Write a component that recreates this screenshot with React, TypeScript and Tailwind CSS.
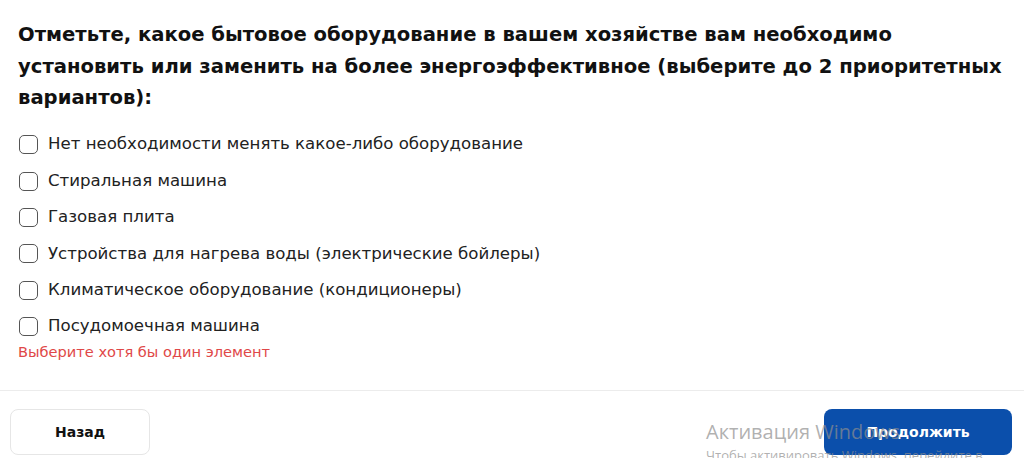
import { useState } from 'react'

const options = [
  'Нет необходимости менять какое-либо оборудование',
  'Стиральная машина',
  'Газовая плита',
  'Устройства для нагрева воды (электрические бойлеры)',
  'Климатическое оборудование (кондиционеры)',
  'Посудомоечная машина',
]

export default function App() {
  const [checked, setChecked] = useState<string[]>([])

  const toggle = (opt: string) => {
    setChecked((prev) => (prev.includes(opt) ? prev.filter((o) => o !== opt) : [...prev, opt]))
  }

  return (
    <div className="relative h-[458px] w-[1024px] overflow-hidden bg-white font-['DejaVu_Sans',sans-serif] text-[#1a1a1a]">
      {/* Вопрос */}
      <div className="pl-[18px] pr-[2px] pt-[19px]">
        <h2 className="text-[19.6px] font-bold leading-[31.5px] text-[#111]">
          Отметьте, какое бытовое оборудование в вашем хозяйстве вам необходимо установить или заменить на
          более энергоэффективное (выберите до 2 приоритетных вариантов):
        </h2>

        <div className="mt-[13px] flex flex-col">
          {options.map((opt) => (
            <label key={opt} className="flex h-[36.4px] cursor-pointer items-center gap-[10px] pl-[1px]">
              <input
                type="checkbox"
                className="sr-only"
                checked={checked.includes(opt)}
                onChange={() => toggle(opt)}
              />
              <span className="h-[19px] w-[19px] shrink-0 rounded-[5px] border-[1.5px] border-[#555] bg-white" />
              <span className="text-[16.6px] leading-none text-[#222]">{opt}</span>
            </label>
          ))}
        </div>

        <p className="text-[14.6px] leading-[14.5px] text-[#e04848]">Выберите хотя бы один элемент</p>
      </div>

      {/* Низ с кнопками */}
      <div className="mt-[31px] border-t border-[#ececec] px-[10px] pt-[18px]">
        <div className="flex items-center justify-between">
          <button className="h-[46px] w-[140px] rounded-[8px] border border-[#e6e6e6] bg-white text-[14px] font-bold text-[#111]">
            Назад
          </button>
          <button className="mr-[2px] h-[46px] w-[188px] rounded-[8px] bg-[#0b4fab] text-[14px] font-bold text-white">
            Продолжить
          </button>
        </div>
      </div>

      {/* Водяной знак Windows */}
      <div className="pointer-events-none absolute left-[706px] top-[419px] font-['Open_Sans',sans-serif] text-[#8e8e8e]/70">
        <div className="text-[20px] leading-[26px]">Активация Windows</div>
        <div className="text-[13px] leading-[20px]">Чтобы активировать Windows, перейдите в раздел "Параметры".</div>
      </div>
    </div>
  )
}
